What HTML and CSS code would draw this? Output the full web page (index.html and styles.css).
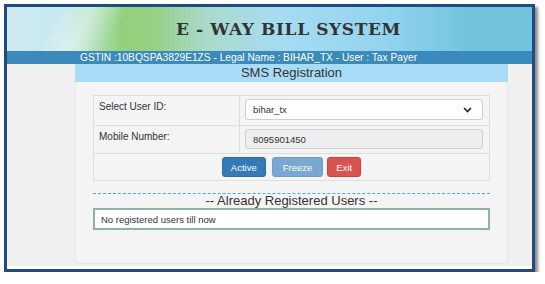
FILE: index.html
```html
<!DOCTYPE html>
<html>
<head>
<meta charset="utf-8">
<link rel="stylesheet" href="styles.css">
</head>
<body>
<div class="frame">
  <div class="banner">
    <div class="swoosh"></div>
    <h1 class="title">E - WAY BILL SYSTEM</h1>
  </div>
  <div class="infobar">GSTIN :10BQSPA3829E1ZS - Legal Name : BIHAR_TX - User : Tax Payer</div>
  <div class="content">
    <div class="container">
      <div class="heading">SMS Registration</div>
      <div class="panel">
        <div class="table">
          <div class="row">
            <div class="label">Select User ID:</div>
            <div class="field">
              <div class="select">
                <span>bihar_tx</span>
                <svg class="chev" width="9" height="6" viewBox="0 0 9 6"><path d="M1 1 L4.5 4.5 L8 1" fill="none" stroke="#222" stroke-width="1.6"/></svg>
              </div>
            </div>
          </div>
          <div class="row">
            <div class="label">Mobile Number:</div>
            <div class="field">
              <div class="input">8095901450</div>
            </div>
          </div>
          <div class="row buttons">
            <button class="btn btn-active">Active</button>
            <button class="btn btn-freeze">Freeze</button>
            <button class="btn btn-exit">Exit</button>
          </div>
        </div>
        <div class="divider"></div>
        <div class="subhead">-- Already Registered Users --</div>
        <div class="notice">No registered users till now</div>
      </div>
    </div>
  </div>
</div>
</body>
</html>
```
FILE: styles.css
```css
html, body { margin: 0; padding: 0; background: #fff; }
body { font-family: "Liberation Sans", Arial, sans-serif; color: #333; }
.frame {
  margin: 4px 0 0 4px;
  width: 525px;
  height: 262px;
  border: 3px solid #1f4b80;
  box-shadow: 3px 3px 3px #8a8a8a;
  background: #fff;
  display: flex;
  flex-direction: column;
}
.banner {
  position: relative;
  height: 44px;
  background: linear-gradient(90deg, #d0eaf1 0%, #c6e7ee 11%, #a9dcae 17%, #93d07c 22%, #96d184 28%, #a9dacb 38%, #a6dcf2 52%, #93d4ef 72%, #72c4dd 88%, #72c4dc 100%);
  overflow: hidden;
  display: flex;
  justify-content: center;
  align-items: center;
}
.swoosh {
  position: absolute;
  left: 40px; top: -20px;
  width: 70px; height: 100px;
  background: linear-gradient(100deg, rgba(255,255,255,0) 0%, rgba(255,255,255,0.4) 45%, rgba(255,255,255,0) 85%);
  transform: skewX(-20deg);
}
.title {
  position: relative;
  margin: 0 0 0 38px;
  font-family: "DejaVu Serif", "Liberation Serif", serif;
  font-weight: bold;
  font-size: 17px;
  letter-spacing: 0.6px;
  color: #333;
}
.infobar {
  height: 13px;
  line-height: 13px;
  background: #3a8abb;
  color: #fff;
  font-size: 10.2px;
  padding-left: 73px;
}
.content {
  height: 202px;
  background: #f0f0f0;
}
.container {
  margin-left: 68px;
  width: 433px;
}
.heading {
  height: 18px;
  line-height: 18px;
  background: #a8dcf6;
  text-align: center;
  font-size: 13px;
  color: #333;
}
.panel {
  height: 182px;
  background: #f4f4f4;
  border: 1px solid #e6e6e6;
  border-top: none;
  border-radius: 0 0 3px 3px;
  padding: 13px 17px 0 17px;
  box-sizing: border-box;
}
.table {
  border: 1px solid #dedede;
}
.row {
  display: flex;
  border-top: 1px solid #dedede;
  height: 28px;
  box-sizing: border-box;
}
.row:first-child { border-top: none; height: 29px; }
.label {
  width: 140px;
  border-right: 1px solid #dedede;
  font-size: 10px;
  padding: 5px 0 0 5px;
  color: #333;
}
.field {
  flex: 1;
  padding: 3px 6px 0 5px;
}
.select {
  height: 21px;
  box-sizing: border-box;
  border: 1px solid #cfcfcf;
  border-radius: 3px;
  background: #fff;
  display: flex;
  align-items: center;
  justify-content: space-between;
  padding: 0 10px 0 7px;
  font-size: 9.5px;
}
.input {
  height: 20px;
  box-sizing: border-box;
  border: 1px solid #cfcfcf;
  border-radius: 3px;
  background: #eeeeee;
  display: flex;
  align-items: center;
  padding: 0 7px;
  font-size: 9.5px;
}
.buttons {
  justify-content: center;
  align-items: center;
  gap: 4px;
  padding-left: 0;
  height: 27px;
}
.btn {
  height: 20px;
  border: 1px solid transparent;
  border-radius: 3px;
  color: #fff;
  font-family: "Liberation Sans", Arial, sans-serif;
  font-size: 9.5px;
  padding: 0 8px;
}
.btn-active { background: #337ab7; border-color: #2e6da4; margin-right: 2px; }
.btn-freeze { background: #7aa8d3; border-color: #6f9ccc; padding: 0 10px; }
.btn-exit { background: #d9534f; border-color: #d43f3a; padding: 0 8px; }
.divider {
  margin-top: 12px;
  border-top: 1px dashed #5ba6d6;
}
.subhead {
  text-align: center;
  font-size: 13px;
  color: #333;
  height: 14px;
  line-height: 14px;
}
.notice {
  height: 22px;
  box-sizing: border-box;
  border: 2px solid #8fb0ac;
  background: #fff;
  font-size: 9.5px;
  padding-left: 6px;
  display: flex;
  align-items: center;
  color: #333;
}
```
